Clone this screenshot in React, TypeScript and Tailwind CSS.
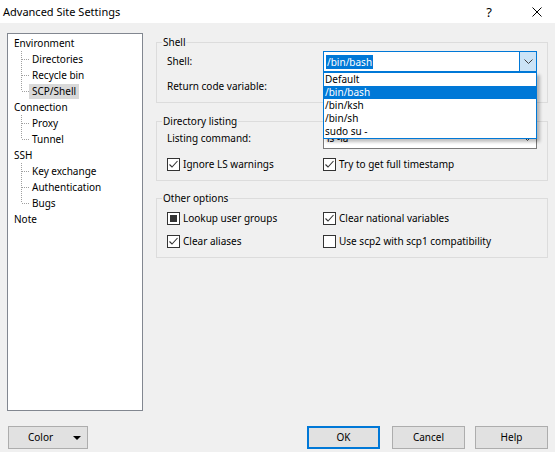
import React from 'react';

const tree = [
  { label: 'Environment', children: ['Directories', 'Recycle bin', 'SCP/Shell'] },
  { label: 'Connection', children: ['Proxy', 'Tunnel'] },
  { label: 'SSH', children: ['Key exchange', 'Authentication', 'Bugs'] },
  { label: 'Note', children: [] as string[] },
];

const shells = ['Default', '/bin/bash', '/bin/ksh', '/bin/sh', 'sudo su -'];

const Connector = ({ last }: { last: boolean }) => (
  <svg width="15" height="16" className="shrink-0">
    <line x1="7.5" y1="0" x2="7.5" y2={last ? 8 : 16} stroke="#a0a0a0" strokeDasharray="1 1" />
    <line x1="8" y1="8.5" x2="15" y2="8.5" stroke="#a0a0a0" strokeDasharray="1 1" />
  </svg>
);

const Chevron = () => (
  <svg width="9" height="6" viewBox="0 0 9 6">
    <path d="M0.5 0.5 L4.5 4.5 L8.5 0.5" fill="none" stroke="#404040" strokeWidth="1" />
  </svg>
);

type State = 'on' | 'off' | 'mixed';

const Check = ({ state, label }: { state: State; label: string }) => (
  <div className="flex items-center h-[13px]">
    <div className="w-[13px] h-[13px] border border-[#333] bg-white flex items-center justify-center shrink-0">
      {state === 'on' && (
        <svg width="11" height="11" viewBox="0 0 11 11">
          <path d="M1.5 5.5 L4 8 L9.5 2" fill="none" stroke="#333" strokeWidth="1.1" />
        </svg>
      )}
      {state === 'mixed' && <div className="w-[7px] h-[7px] bg-[#333]" />}
    </div>
    <span className="ml-[3px] leading-[13px]">{label}</span>
  </div>
);

const Group = ({ title, className, children }: { title: string; className: string; children: React.ReactNode }) => (
  <fieldset className={`border border-[#dcdcdc] pl-[10px] pr-[10px] ${className}`}>
    <legend className="-ml-[5px] px-[1px] leading-[14px]">{title}</legend>
    {children}
  </fieldset>
);

const Button = ({ label, focused }: { label: string; focused?: boolean }) => (
  <div
    className={`w-[73px] h-[23px] bg-[#e1e1e1] flex items-center justify-center ${
      focused ? 'border-2 border-[#0078d7]' : 'border border-[#adadad]'
    }`}
  >
    {label}
  </div>
);

export default function App() {
  return (
    <div className="w-[555px] h-[452px] bg-[#f0f0f0] flex flex-col text-black font-['Noto_Sans',sans-serif] text-[10px] overflow-hidden">
      <div className="h-[23px] bg-white flex items-center shrink-0">
        <span className="ml-[3px] text-[11px] leading-[14px]">Advanced Site Settings</span>
        <span className="ml-auto text-[13px] leading-[14px] mr-[40px]">?</span>
        <svg width="10" height="10" className="mr-[13px]">
          <path d="M0.5 0.5 L9.5 9.5 M9.5 0.5 L0.5 9.5" stroke="#000" strokeWidth="1" />
        </svg>
      </div>

      <div className="flex pt-[10px] px-[7px]">
        <div className="w-[136px] h-[378px] border border-[#828790] bg-white pt-[1px] pl-[6px]">
          {tree.map((g) => (
            <div key={g.label}>
              <div className="h-[16px] flex items-center leading-[16px]">{g.label}</div>
              {g.children.map((c, i) => (
                <div key={c} className="h-[16px] flex items-center">
                  <Connector last={i === g.children.length - 1} />
                  <span
                    className={`h-[15px] px-[3px] flex items-center leading-[15px] ${
                      c === 'SCP/Shell' ? 'bg-[#d9d9d9]' : ''
                    }`}
                  >
                    {c}
                  </span>
                </div>
              ))}
            </div>
          ))}
        </div>

        <div className="ml-[13px] w-[392px] flex flex-col pt-[2px]">
          <Group title="Shell" className="pt-[2px] pb-[5px]">
            <div className="flex items-center h-[21px]">
              <span className="w-[156px] shrink-0">Shell:</span>
              <div className="relative flex-1 h-[21px]">
                <div className="h-full border border-[#0078d7] bg-white flex items-center">
                  <span className="ml-[2px] h-[14px] px-[1px] bg-[#0078d7] text-white leading-[14px]">/bin/bash</span>
                  <div className="ml-auto w-[17px] h-full bg-[#cce4f7] border-l border-[#0078d7] flex items-center justify-center">
                    <Chevron />
                  </div>
                </div>
                <div className="absolute top-full left-0 right-0 z-10 bg-white border border-[#0078d7] shadow-[3px_3px_3px_rgba(0,0,0,0.25)]">
                  {shells.map((s) => (
                    <div
                      key={s}
                      className={`h-[13px] leading-[13px] pl-[1px] ${
                        s === '/bin/bash' ? 'bg-[#0078d7] text-white' : ''
                      }`}
                    >
                      {s}
                    </div>
                  ))}
                </div>
              </div>
            </div>
            <div className="flex items-center h-[21px] mt-[4px]">
              <span className="w-[156px] shrink-0">Return code variable:</span>
              <div className="flex-1 h-[21px] border border-[#7a7a7a] bg-white" />
            </div>
          </Group>

          <Group title="Directory listing" className="mt-[11px] pb-[9px]">
            <div className="flex items-center h-[21px]">
              <span className="w-[156px] shrink-0">Listing command:</span>
              <div className="flex-1 h-[21px] border border-[#7a7a7a] bg-white flex items-center">
                <span className="ml-[3px]">ls -la</span>
                <div className="ml-auto w-[17px] flex items-center justify-center">
                  <Chevron />
                </div>
              </div>
            </div>
            <div className="grid grid-cols-[156px_1fr] mt-[9px]">
              <Check state="on" label="Ignore LS warnings" />
              <Check state="on" label="Try to get full timestamp" />
            </div>
          </Group>

          <Group title="Other options" className="mt-[10px] pt-[7px] pb-[9px]">
            <div className="grid grid-cols-[156px_1fr] gap-y-[10px]">
              <Check state="mixed" label="Lookup user groups" />
              <Check state="on" label="Clear national variables" />
              <Check state="on" label="Clear aliases" />
              <Check state="off" label="Use scp2 with scp1 compatibility" />
            </div>
          </Group>
        </div>
      </div>

      <div className="flex items-center mt-[15px] px-[7px]">
        <div className="ml-[1px] w-[80px] h-[23px] bg-[#e1e1e1] border border-[#adadad] flex items-center">
          <span className="ml-[19px]">Color</span>
          <svg width="8" height="4" className="ml-auto mr-[6px]">
            <path d="M0 0 L8 0 L4 4 Z" fill="#000" />
          </svg>
        </div>
        <div className="ml-auto flex">
          <Button label="OK" focused />
          <div className="ml-[12px]">
            <Button label="Cancel" />
          </div>
          <div className="ml-[10px]">
            <Button label="Help" />
          </div>
        </div>
      </div>
    </div>
  );
}
